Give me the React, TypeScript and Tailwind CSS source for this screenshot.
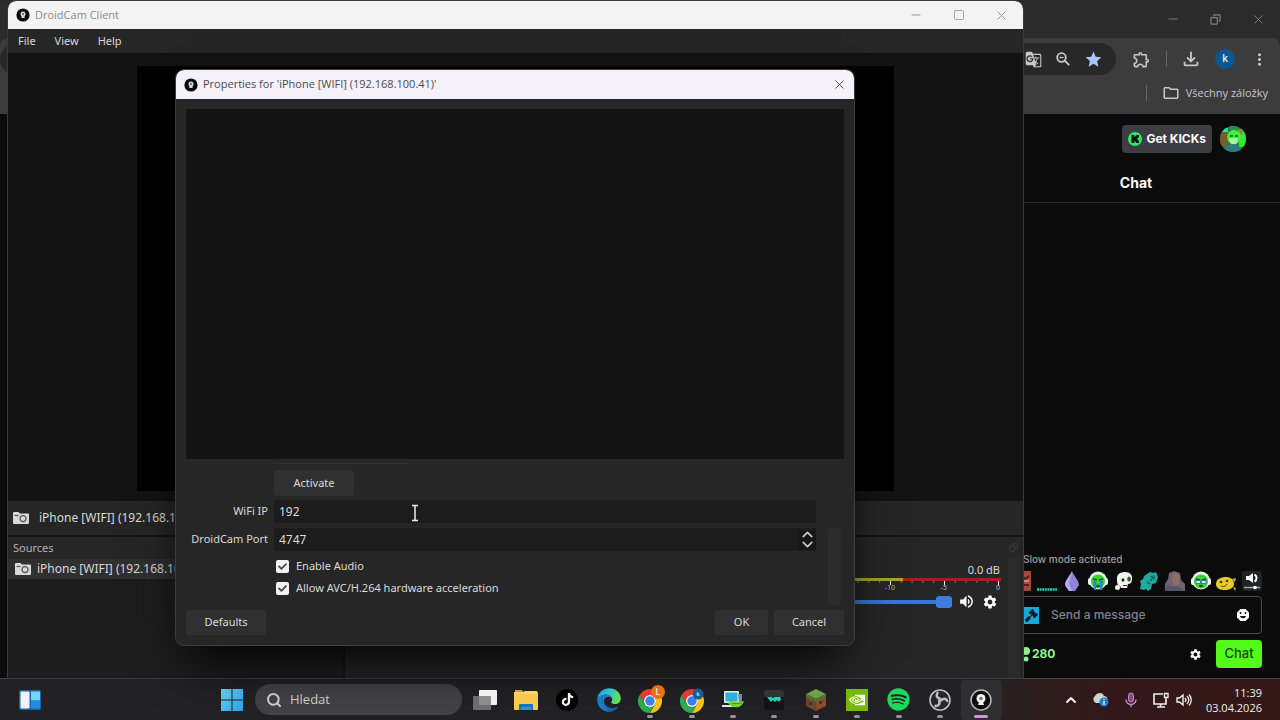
import React from "react";
import { ChevronDown, ChevronUp, Copy, Minus, Search, Square, X } from "lucide-react";
import { FaCheck, FaGavel, FaSpotify, FaTiktok } from "react-icons/fa";
import {
  MdGTranslate,
  MdMoreVert,
  MdOutlineExtension,
  MdOutlineFileDownload,
  MdOutlineFolder,
  MdSettings,
  MdStar,
  MdVolumeUp,
} from "react-icons/md";
import { SiNvidia } from "react-icons/si";

/* ---------- small drawings ---------- */

const DroidLogo = ({ className = "" }: { className?: string }) => (
  <svg viewBox="0 0 14 14" className={className} aria-hidden="true">
    <circle cx="7" cy="7" r="6.6" fill="#0b0b0d" />
    <circle cx="7" cy="6" r="2.5" fill="#ddd" />
    <path d="M5.6 7.5h2.8l.3 2.500H5.300z" fill="#ddd" />
    <circle cx="7" cy="6" r="1.2" fill="#777" />
  </svg>
);

const CameraIcon = () => (
  <svg viewBox="0 0 16 13" className="h-[13px] w-4 shrink-0" aria-hidden="true">
    <path d="M1 0h4.500L7 1.500H15a1 1 0 0 1 1 1V11a1 1 0 0 1-1 1H1a1 1 0 0 1-1-1V1a1 1 0 0 1 1-1z" fill="#d9d9d9" />
    <circle cx="10" cy="6.600" r="3" fill="none" stroke="#555" strokeWidth="1.2" />
    <path d="M1.500 3.500h4" stroke="#555" strokeWidth="1.2" />
  </svg>
);

const ChromeIcon = ({ badge, color, big }: { badge: string; color: string; big?: boolean }) => (
  <svg viewBox="0 0 30 30" className="h-[30px] w-[30px]" aria-hidden="true">
    <g transform="translate(3 4)">
      <path d="M1.6 6A12 12 0 0 1 22.4 6H12a6 6 0 0 0-5.2 9z" fill="#e33b2e" />
      <path d="M22.4 6H12a6 6 0 0 1 5.2 9L12 24A12 12 0 0 0 22.4 6z" fill="#fbc116" />
      <path d="M1.6 6 6.8 15a6 6 0 0 0 10.4 0L12 24A12 12 0 0 1 1.6 6z" fill="#2da94f" />
      <circle cx="12" cy="12" r="6" fill="#fff" />
      <circle cx="12" cy="12" r="4.7" fill="#3f80ee" />
    </g>
    <circle cx={big ? 23 : 21} cy={big ? 7 : 9} r={big ? 7 : 5.5} fill={color} />
    <text
      x={big ? 23 : 21}
      y={big ? 10 : 11}
      fontSize={big ? 9 : 6}
      textAnchor="middle"
      fill="#fff"
      fontFamily="Roboto, sans-serif"
    >
      {badge}
    </text>
  </svg>
);

const EdgeIcon = () => (
  <svg viewBox="0 0 24 24" className="h-6 w-6" aria-hidden="true">
    <defs>
      <linearGradient id="edgeTop" x1="0" y1="0" x2="1" y2="0.4">
        <stop offset="0" stopColor="#249ce0" />
        <stop offset="0.55" stopColor="#33c3c9" />
        <stop offset="1" stopColor="#62df55" />
      </linearGradient>
      <linearGradient id="edgeLow" x1="0" y1="0" x2="1" y2="1">
        <stop offset="0" stopColor="#1f8fdd" />
        <stop offset="1" stopColor="#114e97" />
      </linearGradient>
    </defs>
    <path d="M.2 11A12 12 0 0 1 12 .2C19 .2 23.8 5 23.8 10.5c0 3.6-2.700 5.600-5.600 5.600-2.400 0-4-1-4-1.800 0-.7 1-1 1-2.800 0-2.300-2.200-4.700-5.800-4.700C4.500 6.800.8 9.600.2 11z" fill="url(#edgeTop)" />
    <path d="M.2 11c1-2.700 4.500-4.300 8.500-4.200C6 8.600 5.400 11 5.400 13c0 5 4 9 8.200 10.700A12 12 0 0 1 .2 11z" fill="#1a78cf" />
    <path d="M8.700 9.500C6.500 11.200 6.500 15 8.500 17.300c2.800 3.200 8.300 3.500 13.300.6-1.600 3-4.800 5.500-8.200 5.800C8.500 22.500 5.300 18.500 5.400 13c.1-2.500 1.300-5 4-6.200 3.600 0 5.800 2.400 5.800 4.700-1-2.700-4-3.600-6.500-2z" fill="url(#edgeLow)" />
  </svg>
);

const FolderIcon = () => (
  <svg viewBox="0 0 24 22" className="h-[22px] w-6" aria-hidden="true">
    <path d="M1 1h7l2 3H1z" fill="#d79b1e" />
    <rect x="0" y="3" width="24" height="18" rx="1" fill="#f7cb50" />
    <path d="M0 3h9l2-1h12v3H0z" fill="#fad668" />
    <path d="M5 21v-5a1 1 0 0 1 1-1h12a1 1 0 0 1 1 1v5z" fill="#1676bd" />
    <rect x="7" y="18" width="10" height="3" fill="#2d91d2" />
  </svg>
);

const PcIcon = () => (
  <svg viewBox="0 0 24 20" className="h-5 w-6" aria-hidden="true">
    <rect x="3" y="1" width="15" height="12" rx="1" fill="#e6edf2" />
    <rect x="4.500" y="2.500" width="12" height="9" fill="#2eb0df" />
    <path d="M1 15h14v2H1z" fill="#dfe6ea" />
    <path d="M17 4h4v8h-3z" fill="#7b8991" />
    <path d="M7 13c5-4 8 1 16-2-2 7-11 9-16 2z" fill="#74d52f" />
    <path d="M10 14c4-1 7 0 11-1" stroke="#419d18" fill="none" />
  </svg>
);

const HubIcon = () => (
  <svg viewBox="0 0 20 20" className="h-5 w-5" aria-hidden="true">
    <rect width="20" height="20" rx="3" fill="#111415" />
    <path d="M0 3a3 3 0 0 1 3-3h14a3 3 0 0 1 3 3v4H0z" fill="#303437" />
    <path d="M3 7h4l2 1 2-1h5l1 2-2 3-2-2-2 2-2-2-2 2z" fill="#1bd3bd" />
  </svg>
);

const BlockIcon = () => (
  <svg viewBox="0 0 22 22" className="h-[22px] w-[22px]" aria-hidden="true">
    <path d="M11 0l10 5-10 5L1 5z" fill="#6f9e49" />
    <path d="M1 5l10 5v12L1 17z" fill="#6a4630" />
    <path d="M21 5l-10 5v12l10-5z" fill="#8a4b2b" />
    <path d="M1 5l10 5 10-5v3l-3 2-2-1-2 3-3 1-3-2-2 1-2-3-3-1z" fill="#49743a" />
    <path d="M4 13h3v3H4zM14 15h3v-3h-3z" fill="#4c3224" />
  </svg>
);

const ObsIcon = () => (
  <svg viewBox="0 0 22 22" className="h-[22px] w-[22px]" aria-hidden="true">
    <circle cx="11" cy="11" r="10" fill="#262527" stroke="#bdbdbd" strokeWidth="1.600" />
    <g fill="none" stroke="#bdbdbd" strokeWidth="2.600" strokeLinecap="round">
      <path d="M10.500 9.500C7.500 8.500 7 6 8.500 4" />
      <path d="M12.500 11c2.300-2.200 4.800-1.400 5.700.9" />
      <path d="M10.300 12.500c.8 3-1.200 4.800-3.700 4.400" />
    </g>
    <circle cx="11" cy="11" r="2" fill="#bdbdbd" />
  </svg>
);

const Avatar = () => (
  <svg viewBox="0 0 26 26" className="h-[26px] w-[26px]" aria-hidden="true">
    <defs>
      <clipPath id="avatarClip">
        <circle cx="13" cy="13" r="13" />
      </clipPath>
    </defs>
    <g clipPath="url(#avatarClip)">
      <rect width="26" height="26" fill="#2a7b43" />
      <path d="M0 6h8v14H0z" fill="#7c5a2c" />
      <path d="M18 3h8v18h-7z" fill="#35e833" />
      <path d="M3 2h5v4H2z" fill="#26e6b0" />
      <path d="M9 0h12l-2 4h-9z" fill="#2c8f4a" />
      <circle cx="14" cy="11" r="7" fill="#3ff03c" />
      <path d="M9 12h9l-1 5-3 2-4-2z" fill="#a8f5a0" />
      <path d="M3 26c1-6 5-8 10-8s8 3 9 8z" fill="#2b7f7c" />
      <path d="M10 10h3M15 10h3" stroke="#145b27" strokeWidth="1.500" />
      <path d="M18 2l5 4-2 3z" fill="#b36a2a" />
    </g>
  </svg>
);

/* ---------- chat emotes ---------- */

const FaceEmote = ({ sad }: { sad?: boolean }) => (
  <svg viewBox="0 0 20 20" className="h-5 w-5" aria-hidden="true">
    <circle cx="10" cy="9.500" r="9" fill="#e6f5e4" />
    <rect x="0" y="7" width="4" height="7" rx="2" fill="#f1fbf0" />
    <rect x="16" y="7" width="4" height="7" rx="2" fill="#f1fbf0" />
    <circle cx="10" cy="10.500" r="7" fill="#39cf37" />
    <path d="M5 8l4 1M15 8l-4 1" stroke="#135c1b" strokeWidth="1.500" />
    {sad ? (
      <path d="M5 10h3v9H6zM12 10h3l-1 9h-2z" fill="#2b83d6" />
    ) : (
      <path d="M4.500 9.500h5v3h-4zM10.500 9.500h5l-1 3h-4z" fill="#dff3ff" stroke="#1f66a8" strokeWidth=".8" />
    )}
    <ellipse cx="10" cy="15" rx="2" ry="1.300" fill="#145b1c" />
  </svg>
);

const emotes: { name: string; art: React.ReactNode }[] = [
  {
    name: "brick",
    art: (
      <svg viewBox="0 0 20 20" className="h-5 w-5">
        <rect width="20" height="20" rx="1" fill="#a5483d" />
        <path d="M11 5l3 3 4-3M13 14h5" stroke="#5b1c17" strokeWidth="2" fill="none" />
        <path d="M12 9h6v2h-6z" fill="#d88475" />
      </svg>
    ),
  },
  {
    name: "dots",
    art: (
      <svg viewBox="0 0 20 20" className="h-5 w-5">
        <path d="M0 18.500h20" stroke="#1cd1b8" strokeWidth="2.500" strokeDasharray="2 0.600" />
      </svg>
    ),
  },
  {
    name: "crystal",
    art: (
      <svg viewBox="0 0 20 20" className="h-5 w-5">
        <path d="M10 0c1 4 7 9 7 14l-4 6H7l-4-6C3 9 9 4 10 0z" fill="#9182dc" />
        <path d="M10 0c0 5-3 8-3 13l3 7H7l-4-6C3 9 9 4 10 0z" fill="#b8acf0" />
      </svg>
    ),
  },
  { name: "cry", art: <FaceEmote sad /> },
  {
    name: "skull",
    art: (
      <svg viewBox="0 0 20 20" className="h-5 w-5">
        <path d="M3 7c0-4 4-6 8-6 5 0 8 3 7 8-.5 3-2 4-4 4l-1 4H7l-1-2c-3 0-3-4-3-8z" fill="#f1f2ea" />
        <circle cx="3.500" cy="16.500" r="2.500" fill="#f1f2ea" />
        <ellipse cx="9" cy="9" rx="1.500" ry="1.800" fill="#22251f" />
        <ellipse cx="15" cy="8" rx="1.800" ry="2.600" fill="#2c5c2a" />
        <path d="M9 14h4v1H9z" fill="#22251f" />
      </svg>
    ),
  },
  {
    name: "ghost",
    art: (
      <svg viewBox="0 0 20 20" className="h-5 w-5">
        <path d="M8 3l3-2 3 1 3-1 2 5-2 6-4 1-1 5-3 2-2-2-2 1-4-1 1-5-1-3 3-2 1-3z" fill="#22a99b" />
        <path d="M12 5l2 2-3 3M15 4v4M8 11l3 2" stroke="#0c5f5c" strokeWidth="1.300" fill="none" />
      </svg>
    ),
  },
  {
    name: "rock",
    art: (
      <svg viewBox="0 0 20 20" className="h-5 w-5">
        <path d="M0 20v-7l3-5 1-6 5-2 6 2 1 7 4 4v7z" fill="#71606f" />
        <path d="M7 3l5-1 3 4-1 7-4 2-3-4z" fill="#8e6c6b" />
        <path d="M2 14l6 2 4-1 6 3v2H0z" fill="#56546a" />
      </svg>
    ),
  },
  { name: "stare", art: <FaceEmote /> },
  {
    name: "fish",
    art: (
      <svg viewBox="0 0 20 20" className="h-5 w-5">
        <path d="M0 13c0-5 5-7 10-7s8 3 8 7-5 6-9 6-9-1-9-6z" fill="#e5cc28" />
        <path d="M16 8l4-1-1 4zM17 16l3 1-1 3z" fill="#c5b538" />
        <circle cx="5" cy="11" r="1.300" fill="#463b0a" />
        <circle cx="11" cy="10" r="1.300" fill="#463b0a" />
        <path d="M5 15c2 1 4 1 6-2" stroke="#463b0a" fill="none" />
      </svg>
    ),
  },
  {
    name: "volume",
    art: (
      <svg viewBox="0 0 20 20" className="h-5 w-5">
        <rect width="20" height="20" rx="2" fill="#222326" />
        <path d="M4 5h3l4-3v10L7 9H4z" fill="#fff" />
        <path d="M12.500 3.500a4 4 0 0 1 0 7" stroke="#fff" strokeWidth="2" fill="none" />
        <path d="M2 16.500h16" stroke="#aaa" strokeWidth="1.500" />
        <circle cx="13" cy="16.500" r="1.800" fill="#fff" />
      </svg>
    ),
  },
];

/* ---------- browser in the background ---------- */

const Browser = () => (
  <section className="absolute inset-0 flex flex-col bg-[#2b2b2b]">
    <div className="flex h-[38px] items-center justify-end text-[#858585]">
      <button aria-label="Minimize browser" className="flex w-[43px] justify-center">
        <Minus size={14} strokeWidth={1.5} />
      </button>
      <button aria-label="Restore browser" className="flex w-[43px] justify-center">
        <Copy size={11} strokeWidth={2.5} className="-scale-x-100" />
      </button>
      <button aria-label="Close browser" className="flex w-[43px] justify-center">
        <X size={15} strokeWidth={1.5} />
      </button>
    </div>

    <div className="h-[76px] rounded-t-lg bg-[#3c3c3c] pt-[5px] text-[#c7c7c7]">
      <div className="flex h-8 items-center justify-end pr-1">
        <div className="mr-2 flex h-8 flex-1 items-center justify-end rounded-full bg-[#282828] pr-2">
          <button aria-label="Translate" className="flex w-[30px] justify-center">
            <MdGTranslate size={17} />
          </button>
          <button aria-label="Zoom out" className="flex w-[30px] justify-center">
            <svg viewBox="0 0 14 14" className="h-3.5 w-3.5" fill="none" stroke="currentColor" aria-hidden="true">
              <circle cx="5.500" cy="5.500" r="4.300" strokeWidth="1.800" />
              <path d="M3.500 5.500h4" strokeWidth="1.300" />
              <path d="M8.700 8.700l4.500 4.500" strokeWidth="1.900" />
            </svg>
          </button>
          <button aria-label="Bookmark" className="flex w-[30px] justify-center text-[#a8c7fa]">
            <MdStar size={19} />
          </button>
        </div>
        <button aria-label="Extensions" className="flex w-[34px] justify-center">
          <MdOutlineExtension size={19} />
        </button>
        <div className="flex w-4 justify-center">
          <div className="h-4 w-px bg-[#666]" />
        </div>
        <button aria-label="Downloads" className="flex w-[34px] justify-center">
          <MdOutlineFileDownload size={22} />
        </button>
        <button aria-label="Profile" className="flex w-[34px] justify-center">
          <span className="flex h-5 w-5 items-center justify-center rounded-full bg-[#0b5794] font-['Roboto',sans-serif] text-[11px] font-medium text-[#d8e6f2]">
            k
          </span>
        </button>
        <button aria-label="Menu" className="flex w-[34px] justify-center">
          <MdMoreVert size={19} />
        </button>
      </div>
      <div className="flex h-9 items-center justify-end gap-[15px] pr-3">
        <div className="h-4 w-px bg-[#666]" />
        <button className="flex items-center gap-1.5 font-['Open_Sans',sans-serif] text-[11px]">
          <MdOutlineFolder size={18} />
          Všechny záložky
        </button>
      </div>
    </div>

    <div className="flex min-h-0 flex-1 justify-end bg-[#0b0b0b] font-['Inter',sans-serif]">
      <aside className="flex w-[288px] flex-col">
        <div className="flex h-[50px] items-center justify-end gap-2 pr-[34px]">
          <button className="flex h-7 items-center gap-1 rounded bg-[#3b3d42] px-1.5 text-xs font-bold text-white">
            <svg viewBox="0 0 14 14" className="h-3.5 w-3.5" aria-hidden="true">
              <circle cx="7" cy="7" r="7" fill="#2be868" />
              <path d="M3.500 3h2.800v2.300L8.500 3H11v2L9 7l2 2v2H8.500L6.300 8.700V11H3.500z" fill="#07170b" />
            </svg>
            Get KICKs
          </button>
          <button aria-label="Account">
            <Avatar />
          </button>
        </div>
        <h2 className="flex h-[39px] items-center justify-center border-b border-[#26282b] text-sm font-bold text-white">
          Chat
        </h2>

        <div className="flex-1" />

        <div className="flex flex-col pr-[18px] pb-2.5 pl-4">
          <p className="pl-[15px] text-[10px] leading-4 font-medium text-[#9a9b9e]">Slow mode activated</p>
          <div className="mt-1 flex justify-between pl-[3px]">
            {emotes.map((emote) => (
              <button key={emote.name} aria-label={emote.name}>
                {emote.art}
              </button>
            ))}
          </div>
          <div className="mt-[5px] flex h-[38px] items-center gap-3 rounded border border-[#4a4d51] pr-3 pl-3.5">
            <span className="flex h-[17px] w-4 items-center justify-center bg-[#16a9dc] text-[#071a22]">
              <FaGavel size={13} />
            </span>
            <input
              aria-label="Message"
              placeholder="Send a message"
              className="min-w-0 flex-1 bg-transparent text-xs font-medium outline-none placeholder:text-[#808387]"
            />
            <button aria-label="Emotes">
              <svg viewBox="0 0 12 12" className="h-3 w-3" aria-hidden="true">
                <path d="M3.500 0h5L12 3.500v5L8.500 12h-5L0 8.500v-5z" fill="#fff" />
                <path d="M3.500 3v2M8.500 3v2" stroke="#111" strokeWidth="1.400" />
                <path d="M3 7h6c-.5 3-5.500 3-6 0z" fill="#111" />
              </svg>
            </button>
          </div>
          <div className="mt-1.5 flex items-center gap-0.5">
            <svg viewBox="0 0 14 16" className="ml-2 h-4 w-3.5" aria-hidden="true">
              <circle cx="5" cy="5" r="4.500" fill="#8ff08a" />
              <circle cx="10" cy="5" r="4" fill="#8ff08a" />
              <circle cx="10" cy="13" r="2.500" fill="#8ff08a" />
            </svg>
            <span className="flex-1 text-xs font-bold text-[#93f48e]">280</span>
            <button aria-label="Chat settings" className="mr-3 text-white">
              <MdSettings size={13} />
            </button>
            <button className="h-7 w-[46px] rounded bg-[#53fc18] text-[13px] font-medium text-[#17430c]">
              Chat
            </button>
          </div>
        </div>
      </aside>
    </div>
  </section>
);

/* ---------- DroidCam main window ---------- */

const meterTicks = Array.from({ length: 15 }, (_, i) => i);

const DroidCamWindow = () => (
  <section className="absolute top-px right-[257px] bottom-0 left-2 flex flex-col overflow-hidden rounded-t-lg bg-[#262626] font-['Noto_Sans',sans-serif] text-[11px] text-[#d8d8d8] outline outline-[#3a3a3a]">
    <header className="flex h-7 items-center bg-[#f3f3f3] pl-2 font-['Open_Sans',sans-serif] text-[#8d8d8d]">
      <DroidLogo className="h-3.5 w-3.5" />
      <span className="ml-[5px] flex-1">DroidCam Client</span>
      <button aria-label="Minimize" className="flex w-[43px] justify-center">
        <Minus size={14} strokeWidth={1.5} />
      </button>
      <button aria-label="Maximize" className="flex w-[43px] justify-center">
        <Square size={12} strokeWidth={1.5} />
      </button>
      <button aria-label="Close" className="flex w-[43px] justify-center">
        <X size={15} strokeWidth={1.5} />
      </button>
    </header>

    <nav className="flex h-6 items-center gap-[19px] pl-2.5">
      <button>File</button>
      <button>View</button>
      <button>Help</button>
    </nav>

    <div className="min-h-0 flex-1 bg-[#131313] px-[129px] pt-[13px] pb-2.5">
      <div className="h-full bg-black" />
    </div>

    <div className="flex h-[34px] items-center gap-2.5 pl-[5px]">
      <CameraIcon />
      <span className="text-xs">iPhone [WIFI] (192.168.100.41)</span>
    </div>

    <div className="flex h-[143px] border-t-2 border-[#161616]">
      <div className="flex w-[335px] flex-col bg-[#1d1d1d]">
        <h3 className="flex h-[22px] items-center bg-[#262626] pl-[5px] text-[#b4b4b4]">Sources</h3>
        <div className="flex h-5 items-center gap-1.5 bg-[#303030] pl-[7px]">
          <CameraIcon />
          <span className="text-xs">iPhone [WIFI] (192.168.100.41)</span>
        </div>
      </div>
      <div className="w-0.5 bg-[#161616]" />
      <div className="flex min-w-0 flex-1">
        <div className="min-w-0 flex-1 pt-[25px] pl-2.5">
          <div className="pr-1 text-right leading-4">0.0 dB</div>
          <div className="mr-[3px] flex h-[3px]">
            <div className="flex-1 bg-[#a3a52e]" />
            <div className="w-[98px] bg-[#a3201b]" />
          </div>
          <svg viewBox="0 0 160 11" className="ml-auto h-[11px] w-40" aria-hidden="true">
            {meterTicks.map((n) => (
              <path
                key={n}
                d={`M${154.500 - n * 10.8} 0v${n % 5 === 0 ? 4 : 2}`}
                stroke={n % 5 === 0 ? "#eee" : "#777"}
              />
            ))}
            <g fill="#bbb" fontSize="7" textAnchor="middle" fontFamily="Noto Sans, sans-serif">
              <text x="154" y="9">0</text>
              <text x="100" y="9">-5</text>
              <text x="46" y="9">-10</text>
            </g>
          </svg>
          <div className="mt-px flex items-center pr-0.5 text-white">
            <input
              type="range"
              aria-label="Volume"
              min={0}
              max={100}
              defaultValue={100}
              className="mr-0.5 h-3 min-w-0 flex-1 appearance-none bg-transparent [&::-webkit-slider-runnable-track]:h-1 [&::-webkit-slider-runnable-track]:rounded [&::-webkit-slider-runnable-track]:bg-[#3578d4] [&::-webkit-slider-thumb]:-mt-1 [&::-webkit-slider-thumb]:h-3 [&::-webkit-slider-thumb]:w-4 [&::-webkit-slider-thumb]:appearance-none [&::-webkit-slider-thumb]:rounded-[3px] [&::-webkit-slider-thumb]:bg-[#3f7ddb]"
            />
            <button aria-label="Mute" className="flex w-6 justify-center">
              <MdVolumeUp size={17} />
            </button>
            <button aria-label="Audio settings" className="flex w-6 justify-center">
              <MdSettings size={16} />
            </button>
          </div>
        </div>
        <div className="flex w-[19px] flex-col items-center pt-1.5 text-[#464646]">
          <Copy size={9} className="-scale-x-100" />
          <div className="mt-1.5 w-3 flex-1 bg-[#2b2b2b]" />
        </div>
      </div>
    </div>
  </section>
);

/* ---------- properties dialog ---------- */

const CheckRow = ({ id, label }: { id: string; label: string }) => (
  <div className="flex h-[22px] items-center gap-[7px] pl-0.5">
    <span className="relative flex h-[13px] w-[13px]">
      <input id={id} type="checkbox" defaultChecked className="h-[13px] w-[13px] appearance-none rounded-xs bg-[#f2f2f2]" />
      <FaCheck size={9} className="pointer-events-none absolute top-0.5 left-0.5 text-[#4a4a4a]" />
    </span>
    <label htmlFor={id}>{label}</label>
  </div>
);

const PropertiesDialog = () => (
  <section
    role="dialog"
    aria-label="Properties"
    className="absolute top-[70px] right-[426px] bottom-[33px] left-44 flex flex-col overflow-hidden rounded-lg bg-[#262626] font-['Noto_Sans',sans-serif] text-[11px] text-[#dadada] shadow-2xl shadow-black outline outline-[#3d3d3d]"
  >
    <header className="flex h-[29px] items-center bg-[#f4f1fa] pl-2 font-['Open_Sans',sans-serif] text-[#4b4b4b]">
      <DroidLogo className="h-3.5 w-3.5" />
      <span className="ml-[5px] flex-1">Properties for 'iPhone [WIFI] (192.168.100.41)'</span>
      <button aria-label="Close dialog" className="flex w-[30px] justify-center">
        <X size={15} strokeWidth={1.5} />
      </button>
    </header>

    <div className="flex min-h-0 flex-1 flex-col px-2.5 pt-2.5 pb-2.5">
      <div className="min-h-0 flex-1 bg-[#141414]" />

      <div className="mt-1 flex">
        <form className="grid flex-1 grid-cols-[82px_1fr] items-center gap-x-1.5 pb-1.5">
          <div className="col-start-2">
            <div className="mb-1.5 h-px w-[134px] bg-[#333]" />
            <button type="button" className="h-[26px] w-20 rounded-xs bg-[#303030]">
              Activate
            </button>
          </div>

          <label htmlFor="ip" className="mt-1 text-right whitespace-nowrap">
            WiFi IP
          </label>
          <input id="ip" defaultValue="192" className="mt-1 h-[23px] w-full rounded-xs bg-[#1c1c1c] px-[5px] text-xs outline-none" />

          <label htmlFor="port" className="mt-[5px] text-right whitespace-nowrap">
            DroidCam Port
          </label>
          <div className="mt-[5px] flex h-[23px] items-center rounded-xs bg-[#1c1c1c]">
            <input id="port" defaultValue="4747" className="min-w-0 flex-1 bg-transparent px-[5px] text-xs outline-none" />
            <div className="flex flex-col bg-[#171717] text-[#c4c4c4]">
              <button type="button" aria-label="Increase port" className="flex h-2.5 items-center">
                <ChevronUp size={17} strokeWidth={2.5} />
              </button>
              <button type="button" aria-label="Decrease port" className="flex h-2.5 items-center">
                <ChevronDown size={17} strokeWidth={2.5} />
              </button>
            </div>
          </div>

          <div className="col-start-2 mt-1">
            <CheckRow id="audio" label="Enable Audio" />
            <CheckRow id="hw" label="Allow AVC/H.264 hardware acceleration" />
          </div>
        </form>
        <div className="ml-3 flex w-4 items-end">
          <div className="h-[77px] w-[13px] rounded-xs bg-[#2c2c2c]" />
        </div>
      </div>

      <footer className="mt-[5px] flex gap-1.5">
        <button className="h-[25px] w-20 rounded-xs bg-[#303030]">Defaults</button>
        <div className="flex-1" />
        <button className="h-[25px] w-[53px] rounded-xs bg-[#303030]">OK</button>
        <button className="h-[25px] w-[70px] rounded-xs bg-[#303030]">Cancel</button>
      </footer>
    </div>
  </section>
);

/* ---------- taskbar ---------- */

const taskApps: { name: string; art: React.ReactNode; open?: boolean; active?: boolean }[] = [
  {
    name: "Task view",
    art: (
      <svg viewBox="0 0 24 22" className="h-[22px] w-6">
        <rect x="6" y="1" width="18" height="15" rx="1" fill="#f0f0f0" />
        <rect x="0" y="7" width="18" height="14" rx="1" fill="#7b7b7b" fillOpacity=".85" />
      </svg>
    ),
  },
  { name: "Explorer", art: <FolderIcon /> },
  {
    name: "TikTok",
    art: (
      <span className="flex h-[22px] w-[22px] items-center justify-center rounded-full bg-black text-white">
        <FaTiktok size={13} />
      </span>
    ),
  },
  { name: "Edge", art: <EdgeIcon /> },
  { name: "Chrome L", art: <ChromeIcon badge="L" color="#e8700f" big />, open: true },
  { name: "Chrome K", art: <ChromeIcon badge="k" color="#1d5d93" />, open: true },
  { name: "PC", art: <PcIcon />, open: true },
  { name: "Hub", art: <HubIcon />, open: true },
  { name: "Minecraft", art: <BlockIcon />, open: true },
  {
    name: "NVIDIA",
    art: (
      <span className="flex h-[22px] w-[22px] items-center justify-center bg-[#76b900] text-white">
        <SiNvidia size={16} />
      </span>
    ),
    open: true,
  },
  { name: "Spotify", art: <FaSpotify size={23} color="#1ed760" />, open: true },
  { name: "OBS", art: <ObsIcon />, open: true },
  {
    name: "DroidCam",
    art: (
      <svg viewBox="0 0 22 22" className="h-[22px] w-[22px]">
        <circle cx="11" cy="11" r="10" fill="#0c0c0c" stroke="#b8b8b8" strokeWidth="1.500" />
        <circle cx="11" cy="9.500" r="4.500" fill="#f2f2f2" />
        <circle cx="11" cy="9.500" r="1.800" fill="#777" />
        <path d="M9 13h4l1 3H8z" fill="#f2f2f2" />
      </svg>
    ),
    open: true,
    active: true,
  },
];

const Taskbar = () => (
  <footer className="flex h-[42px] items-center border-t border-[#444] bg-linear-to-r from-[#222224] from-75% via-[#32191a] via-85% to-[#341816] font-['Open_Sans',sans-serif] text-[#f0f0f0]">
    <button aria-label="Widgets" className="ml-[18px]">
      <svg viewBox="0 0 24 22" className="h-[22px] w-6" aria-hidden="true">
        <rect x="1" y="1" width="22" height="20" rx="2" fill="#1666ac" />
        <rect x="2.500" y="2.500" width="9" height="17" rx="1" fill="#f3f1fb" />
        <rect x="13" y="2.500" width="9" height="9" fill="#74d5f7" />
        <rect x="13" y="11.500" width="9" height="8" fill="#278bdc" />
      </svg>
    </button>
    <button aria-label="Start" className="ml-[179px]">
      <svg viewBox="0 0 22 22" className="h-[22px] w-[22px]" aria-hidden="true">
        <defs>
          <linearGradient id="winGrad" x1="0" y1="0" x2="1" y2="1">
            <stop offset="0" stopColor="#75dbfb" />
            <stop offset="1" stopColor="#27a2ef" />
          </linearGradient>
        </defs>
        <path d="M0 0h10.500v10.500H0zM11.500 0H22v10.500H11.500zM0 11.500h10.500V22H0zM11.500 11.500H22V22H11.500z" fill="url(#winGrad)" />
      </svg>
    </button>
    <label className="ml-3 flex h-[31px] w-[207px] items-center gap-2 rounded-full bg-[#434245] px-[11px]">
      <Search size={16} strokeWidth={3} className="text-[#d5d5d5]" />
      <input
        aria-label="Hledat"
        placeholder="Hledat"
        className="min-w-0 flex-1 bg-transparent text-[13px] outline-none placeholder:text-[#d5d5d5]"
      />
    </label>
    <div className="ml-0.5 grid w-[538px] grid-cols-13">
      {taskApps.map((app) => (
        <button
          key={app.name}
          aria-label={app.name}
          className={
            app.active
              ? "relative flex h-10 items-center justify-center rounded bg-[#2f2e30]"
              : "relative flex h-10 items-center justify-center"
          }
        >
          {app.art}
          {app.open && (
            <span
              className={
                app.active
                  ? "absolute bottom-0.5 h-[3px] w-3.5 rounded-full bg-[#cd96d6]"
                  : "absolute bottom-0.5 h-[3px] w-1.5 rounded-full bg-[#969696]"
              }
            />
          )}
        </button>
      ))}
    </div>

    <div className="ml-auto flex items-center pr-[18px]">
      <button aria-label="Hidden icons" className="flex w-[30px] justify-center">
        <ChevronUp size={16} strokeWidth={3} />
      </button>
      <button aria-label="OneDrive" className="flex w-[30px] justify-center">
        <svg viewBox="0 0 17 15" className="h-[15px] w-[17px]" aria-hidden="true">
          <path d="M4 11a4 4 0 0 1-1-7c2-4 8-4 9 0 3 0 4 3 3 5l-3 2z" fill="#d5d0d2" />
          <circle cx="12" cy="10" r="4.500" fill="#1d7ed0" />
          <path d="M12 9v4M12 7v1" stroke="#fff" strokeWidth="1.300" />
        </svg>
      </button>
      <button aria-label="Microphone" className="flex w-[30px] justify-center">
        <svg viewBox="0 0 12 16" className="h-4 w-3" aria-hidden="true">
          <rect x="3.500" y="1" width="5" height="9" rx="2.500" fill="#805078" stroke="#c38bc9" />
          <path d="M1 7.500a5 5 0 0 0 10 0M6 12.500V15" stroke="#c38bc9" strokeWidth="1.400" fill="none" />
        </svg>
      </button>
      <button aria-label="Network" className="flex w-[30px] justify-center">
        <svg viewBox="0 0 16 16" className="h-4 w-4" aria-hidden="true">
          <path d="M10 2H1v10h12V8M4 15h8M7.500 12v3" stroke="#f0f0f0" strokeWidth="1.600" fill="none" />
          <path d="M11.500 1.500h3.500v4h-3.500zM13 5.500V9" stroke="#f0f0f0" strokeWidth="1.400" fill="none" />
        </svg>
      </button>
      <button aria-label="Volume control" className="mr-3.5 flex w-4 justify-center">
        <svg viewBox="0 0 16 14" className="h-3.5 w-4" aria-hidden="true">
          <path d="M1 5h2.500L7 2v10L3.500 9H1z" stroke="#f0f0f0" strokeWidth="1.400" fill="none" />
          <path d="M9 5a3 3 0 0 1 0 4M11 3a5.500 5.500 0 0 1 0 8M13 1.500a8 8 0 0 1 0 11" stroke="#f0f0f0" strokeWidth="1.300" fill="none" />
        </svg>
      </button>
      <div className="text-right text-[11px] leading-[15px]">
        <div>11:39</div>
        <div>03.04.2026</div>
      </div>
    </div>
  </footer>
);

export default function App() {
  return (
    <div className="flex h-screen flex-col overflow-hidden bg-black">
      <main className="relative min-h-0 flex-1">
        <Browser />
        <DroidCamWindow />
        <PropertiesDialog />
        {/* text pointer over the IP field */}
        <svg viewBox="0 0 8 18" className="pointer-events-none absolute top-[504px] left-[411px] h-[18px] w-2" aria-hidden="true">
          <path d="M1 1.500h6M1 16.500h6M4 1.500v15" stroke="#eee" strokeWidth="1.500" />
        </svg>
      </main>
      <Taskbar />
    </div>
  );
}
